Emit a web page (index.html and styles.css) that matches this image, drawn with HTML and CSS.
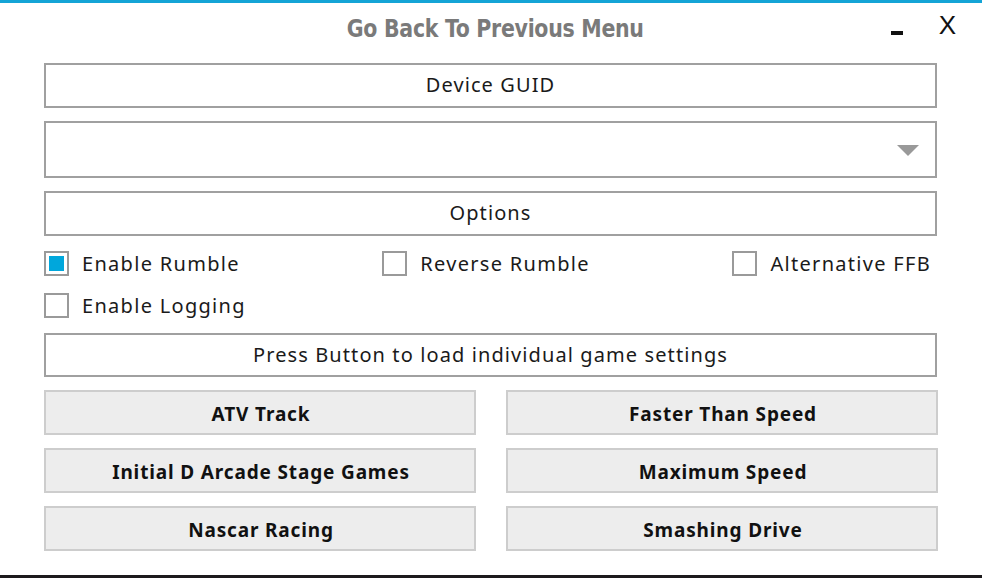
FILE: index.html
```html
<!DOCTYPE html>
<html lang="en">
<head>
    <meta charset="UTF-8">
    <meta name="viewport" content="width=device-width, initial-scale=1.0">
    <title>FFB Settings</title>
    <link rel="stylesheet" href="styles.css">
</head>
<body>
    <div class="window">
        <div class="titlebar">
            <div class="title">Go Back To Previous Menu</div>
            <div class="controls">
                <span class="minimize"></span>
                <span class="close">X</span>
            </div>
        </div>

        <div class="content">
            <div class="box">Device GUID</div>

            <div class="dropdown">
                <span class="arrow"></span>
            </div>

            <div class="box">Options</div>

            <!-- checkbox options -->
            <div class="check-row">
                <label class="check"><span class="tick checked"></span>Enable Rumble</label>
                <label class="check"><span class="tick"></span>Reverse Rumble</label>
                <label class="check"><span class="tick"></span>Alternative FFB</label>
            </div>
            <div class="check-row">
                <label class="check"><span class="tick"></span>Enable Logging</label>
            </div>

            <div class="box press">Press Button to load individual game settings</div>

            <div class="games">
                <button class="game">ATV Track</button>
                <button class="game">Faster Than Speed</button>
                <button class="game">Initial D Arcade Stage Games</button>
                <button class="game">Maximum Speed</button>
                <button class="game">Nascar Racing</button>
                <button class="game">Smashing Drive</button>
            </div>
        </div>
        <div class="taskbar"></div>
    </div>
</body>
</html>
```

FILE: styles.css
```css
/* Basic styling */
body {
    margin: 0;
    background-color: #fff;
    font-family: 'Noto Sans', 'Open Sans', sans-serif;
    color: #1a1a1a;
}

.window {
    width: 982px;
    height: 578px;
    border-top: 3px solid #14a4d6;
    box-sizing: border-box;
    display: flex;
    flex-direction: column;
    overflow: hidden;
}

.titlebar {
    height: 60px;
    position: relative;
    display: flex;
    justify-content: center;
}

.title {
    font-family: 'DejaVu Sans Condensed', 'Liberation Sans Narrow', sans-serif;
    font-weight: bold;
    font-size: 24px;
    color: #7a7a7a;
    margin-top: 12px;
    margin-left: 8px;
    letter-spacing: -0.3px;
    transform: scaleX(0.95);
}

.controls {
    position: absolute;
    right: 26px;
    top: 7px;
    display: flex;
    align-items: center;
    gap: 36px;
}

.minimize {
    width: 12px;
    height: 4px;
    background-color: #111;
    margin-top: 15px;
}

.close {
    font-family: 'Liberation Sans', sans-serif;
    font-size: 26px;
    color: #111;
}

.content {
    padding: 0 45px 0 44px;
    display: flex;
    flex-direction: column;
    flex: 1;
}

.box {
    height: 45px;
    border: 2px solid #a0a0a0;
    box-sizing: border-box;
    display: flex;
    align-items: center;
    justify-content: center;
    font-size: 20px;
    letter-spacing: 1.1px;
    margin-bottom: 13px;
    padding-bottom: 2px;
}

.dropdown {
    height: 57px;
    border: 2px solid #a0a0a0;
    box-sizing: border-box;
    margin-bottom: 13px;
    display: flex;
    align-items: center;
    justify-content: flex-end;
    padding-right: 16px;
}

.arrow {
    width: 0;
    height: 0;
    border-left: 11px solid transparent;
    border-right: 11px solid transparent;
    border-top: 11px solid #999;
    margin-top: 2px;
}

.check-row {
    display: flex;
    justify-content: space-between;
    padding-right: 6px;
    margin-top: 2px;
    margin-bottom: 15px;
}

.check {
    display: flex;
    align-items: center;
    font-size: 20px;
    letter-spacing: 1.3px;
    height: 25px;
    gap: 13px;
}

.tick {
    width: 25px;
    height: 25px;
    border: 2px solid #9a9a9a;
    box-sizing: border-box;
    background-color: #fff;
}

.tick.checked {
    background-color: #00a7dc;
    box-shadow: inset 0 0 0 3px #fff;
}

.press {
    height: 44px;
    margin-top: 0;
}

.games {
    display: grid;
    grid-template-columns: 432px 432px;
    column-gap: 30px;
    row-gap: 13px;
}

.game {
    height: 45px;
    background-color: #ededed;
    border: 2px solid #cdcdcd;
    font-family: 'Noto Sans', 'Open Sans', sans-serif;
    font-weight: bold;
    font-size: 19px;
    letter-spacing: 0.85px;
    color: #111;
    padding: 3px 0 0 2px;
}

.taskbar {
    height: 3px;
    background-color: #1c1a1c;
}
```
